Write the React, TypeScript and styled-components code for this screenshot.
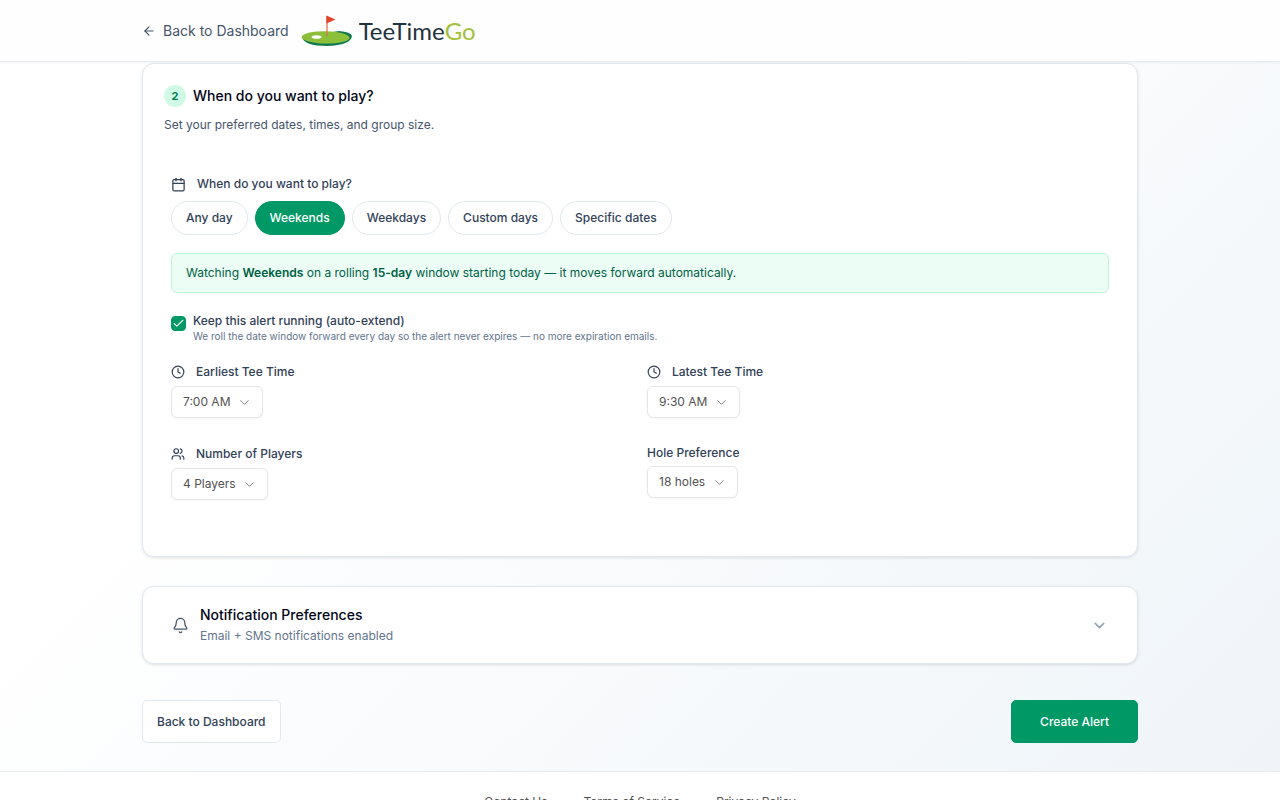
import React from "react";
import styled, { createGlobalStyle, css } from "styled-components";
import { ArrowLeft, Bell, Calendar, Check, ChevronDown, Clock, Users } from "lucide-react";

const GlobalStyle = createGlobalStyle`
  *, *::before, *::after { box-sizing: border-box; }
  body {
    margin: 0;
    font-family: Inter, "Liberation Sans", sans-serif;
    font-size: 12px;
    line-height: 18px;
    color: #314158;
    background: #fff;
  }
  button, input, select { font: inherit; color: inherit; margin: 0; }
  h1, h2, p { margin: 0; font-weight: 400; }
`;

const Page = styled.div`
  min-height: 100vh;
  background: linear-gradient(135deg, #ffffff 30%, #f8fafc 60%, #f2f7fa 82%, #eff3f8 100%);
`;

const Container = styled.div`
  max-width: 1024px;
  margin: 0 auto;
  padding: 0 14px;
`;

const Header = styled.header`
  background: #fefefe;
  border-bottom: 1px solid #e8ecf0;
  box-shadow: 0 1px 2px rgba(15, 23, 43, 0.05);
`;

const HeaderRow = styled(Container)`
  display: flex;
  align-items: center;
  gap: 12px;
  height: 61px;
`;

const BackLink = styled.a`
  display: flex;
  align-items: center;
  gap: 7px;
  color: #45556c;
  font-size: 14px;
  text-decoration: none;
`;

const Brand = styled.a`
  display: flex;
  align-items: center;
  gap: 6px;
  color: #1f3440;
  font-family: Lato, sans-serif;
  font-size: 24px;
  line-height: 32px;
  text-decoration: none;

  em {
    color: #a3c13a;
    font-style: normal;
  }
`;

const Main = styled.main`
  padding: 1px 0 28px;
`;

const Card = styled.section`
  background: #fff;
  border: 1px solid #e2e8f0;
  border-radius: 12px;
  box-shadow: 0 1px 3px rgba(15, 23, 43, 0.12);
`;

const StepCard = styled(Card)`
  padding: 21px 28px 56px;
`;

const StepHeader = styled.header`
  margin: 0 -7px 41px;
`;

const StepTitle = styled.h1`
  display: flex;
  align-items: center;
  gap: 7px;
  color: #020618;
  font-size: 14px;
  font-weight: 500;
  line-height: 22px;
`;

const StepNumber = styled.span`
  display: grid;
  place-items: center;
  width: 22px;
  height: 22px;
  border-radius: 50%;
  background: #d0fae5;
  color: #007a55;
  font-size: 11px;
  font-weight: 700;
`;

const StepHint = styled.p`
  margin-top: 9px;
  color: #45556c;
`;

const Caption = styled.span<{ $plain?: boolean }>`
  display: flex;
  align-items: center;
  gap: 11px;
  min-height: 18px;
  font-weight: 500;
  ${(p) =>
    p.$plain &&
    css`
      min-height: 16px;
      line-height: 16px;
    `}
`;

const PillRow = styled.div`
  display: flex;
  flex-wrap: wrap;
  gap: 7px;
  margin-top: 8px;
`;

const Pill = styled.button<{ $active?: boolean }>`
  height: 34px;
  padding: 0 14px;
  border: 1px solid ${(p) => (p.$active ? "#009966" : "#e2e8f0")};
  border-radius: 17px;
  background: ${(p) => (p.$active ? "#009966" : "#fff")};
  color: ${(p) => (p.$active ? "#fff" : "#314158")};
  font-weight: 500;
`;

const Notice = styled.p`
  margin-top: 18px;
  padding: 10px 14px;
  border: 1px solid #b9f3d8;
  border-radius: 6px;
  background: #ecfdf5;
  color: #006045;

  strong { font-weight: 600; }
`;

const ExtendRow = styled.div`
  display: flex;
  gap: 7px;
  margin-top: 20px;
`;

const CheckWrap = styled.span`
  display: grid;
  place-items: center;
  width: 15px;
  height: 15px;
  margin-top: 3px;
  color: #fff;

  > * { grid-area: 1 / 1; }
  svg { pointer-events: none; }
`;

const CheckInput = styled.input`
  appearance: none;
  width: 15px;
  height: 15px;
  border: 1px solid #cad5e2;
  border-radius: 4px;

  &:checked {
    border-color: #009966;
    background: #009966;
  }
`;

const ExtendText = styled.div`
  label {
    display: block;
    font-weight: 500;
    line-height: 16px;
  }
  p {
    color: #62748e;
    font-size: 10px;
    line-height: 14px;
  }
`;

const FieldGrid = styled.div`
  display: grid;
  grid-template-columns: 1fr 1fr;
  gap: 27px 14px;
  margin-top: 20px;
`;

const Field = styled.div`
  label { display: block; }
`;

const SelectWrap = styled.span`
  display: inline-grid;
  align-items: center;
  margin-top: 5px;

  > * { grid-area: 1 / 1; }
  svg {
    justify-self: end;
    margin-right: 11px;
    color: #808080;
    pointer-events: none;
  }
`;

const Select = styled.select`
  appearance: none;
  height: 32px;
  padding: 0 31px 0 11px;
  border: 1px solid #e5e5e5;
  border-radius: 6px;
  background: #fff;
  box-shadow: 0 1px 2px rgba(0, 0, 0, 0.04);
  color: #525252;
`;

const NotifyCard = styled(Card)`
  margin-top: 29px;
`;

const NotifyToggle = styled.button`
  display: flex;
  align-items: center;
  gap: 11px;
  width: 100%;
  padding: 17px 29px;
  border: 0;
  background: none;
  text-align: left;
`;

const NotifyText = styled.span`
  flex: 1;
  display: flex;
  flex-direction: column;
  color: #62748e;
  line-height: 21px;

  b {
    color: #020618;
    font-size: 14px;
    font-weight: 500;
  }
`;

const Actions = styled.div`
  display: flex;
  justify-content: space-between;
  margin-top: 36px;
`;

const Action = styled.button<{ $primary?: boolean }>`
  height: 43px;
  padding: 0 14px;
  border: 1px solid #e2e8f0;
  border-radius: 5px;
  background: #fff;
  font-weight: 500;
  ${(p) =>
    p.$primary &&
    css`
      padding: 0 28px;
      border-color: #009966;
      background: #009966;
      color: #fff;
    `}
`;

const Footer = styled.footer`
  padding: 21px 0 28px;
  border-top: 1px solid #e8ecf1;
  background: #fff;
`;

const FooterNav = styled.nav`
  display: flex;
  justify-content: center;
  gap: 36px;

  a {
    color: #525252;
    text-decoration: none;
  }
`;

function GolfGreen() {
  return (
    <svg width="52" height="32" viewBox="0 0 52 32" aria-hidden="true">
      <path d="M1 22 Q3 31 26 31 Q50 30 51 21 Q50 17 38 16 Z" fill="#0f7a52" />
      <ellipse cx="24.6" cy="22.4" rx="24" ry="6.2" fill="#8cbf3a" transform="rotate(1 25 22)" />
      <ellipse cx="15.6" cy="22" rx="5" ry="1.8" fill="#fff" />
      <path d="M26 1 V21" stroke="#e2674a" strokeWidth="1.2" />
      <path d="M25.4 0.6 L34.5 4.6 L25.4 8.4 Z" fill="#e2452c" />
    </svg>
  );
}

type SelectFieldProps = {
  id: string;
  label: string;
  icon?: React.ReactNode;
  options: string[];
};

function SelectField({ id, label, icon, options }: SelectFieldProps) {
  return (
    <Field>
      <label htmlFor={id}>
        <Caption $plain={!icon}>
          {icon}
          {label}
        </Caption>
      </label>
      <SelectWrap>
        <Select id={id} defaultValue={options[0]}>
          {options.map((o) => (
            <option key={o}>{o}</option>
          ))}
        </Select>
        <ChevronDown size={15} strokeWidth={1.6} />
      </SelectWrap>
    </Field>
  );
}

const DAY_MODES = ["Any day", "Weekends", "Weekdays", "Custom days", "Specific dates"];

export default function App() {
  const [mode, setMode] = React.useState("Weekends");
  return (
    <Page>
      <GlobalStyle />
      <Header>
        <HeaderRow>
          <BackLink href="#dashboard">
            <ArrowLeft size={14} />
            Back to Dashboard
          </BackLink>
          <Brand href="#home">
            <GolfGreen />
            <span>
              TeeTime<em>Go</em>
            </span>
          </Brand>
        </HeaderRow>
      </Header>

      <Main>
        <Container>
          <StepCard>
            <StepHeader>
              <StepTitle>
                <StepNumber>2</StepNumber>
                When do you want to play?
              </StepTitle>
              <StepHint>Set your preferred dates, times, and group size.</StepHint>
            </StepHeader>

            <div role="group" aria-labelledby="day-mode">
              <Caption id="day-mode">
                <Calendar size={15} />
                When do you want to play?
              </Caption>
              <PillRow>
                {DAY_MODES.map((m) => (
                  <Pill key={m} type="button" $active={m === mode} aria-pressed={m === mode} onClick={() => setMode(m)}>
                    {m}
                  </Pill>
                ))}
              </PillRow>
            </div>

            <Notice>
              Watching <strong>Weekends</strong> on a rolling <strong>15-day</strong> window starting today — it moves
              forward automatically.
            </Notice>

            <ExtendRow>
              <CheckWrap>
                <CheckInput id="extend" type="checkbox" defaultChecked />
                <Check size={13} />
              </CheckWrap>
              <ExtendText>
                <label htmlFor="extend">Keep this alert running (auto-extend)</label>
                <p>We roll the date window forward every day so the alert never expires — no more expiration emails.</p>
              </ExtendText>
            </ExtendRow>

            <FieldGrid>
              <SelectField id="earliest" label="Earliest Tee Time" icon={<Clock size={14} />} options={["7:00 AM"]} />
              <SelectField id="latest" label="Latest Tee Time" icon={<Clock size={14} />} options={["9:30 AM"]} />
              <SelectField id="players" label="Number of Players" icon={<Users size={14} />} options={["4 Players"]} />
              <SelectField id="holes" label="Hole Preference" options={["18 holes"]} />
            </FieldGrid>
          </StepCard>

          <NotifyCard>
            <NotifyToggle type="button" aria-expanded={false}>
              <Bell size={17} color="#45556c" strokeWidth={1.8} />
              <NotifyText>
                <b>Notification Preferences</b>
                <span>Email + SMS notifications enabled</span>
              </NotifyText>
              <ChevronDown size={17} color="#90a1b9" />
            </NotifyToggle>
          </NotifyCard>

          <Actions>
            <Action type="button">Back to Dashboard</Action>
            <Action type="submit" $primary>
              Create Alert
            </Action>
          </Actions>
        </Container>
      </Main>

      <Footer>
        <FooterNav>
          <a href="#contact">Contact Us</a>
          <a href="#terms">Terms of Service</a>
          <a href="#privacy">Privacy Policy</a>
        </FooterNav>
      </Footer>
    </Page>
  );
}
